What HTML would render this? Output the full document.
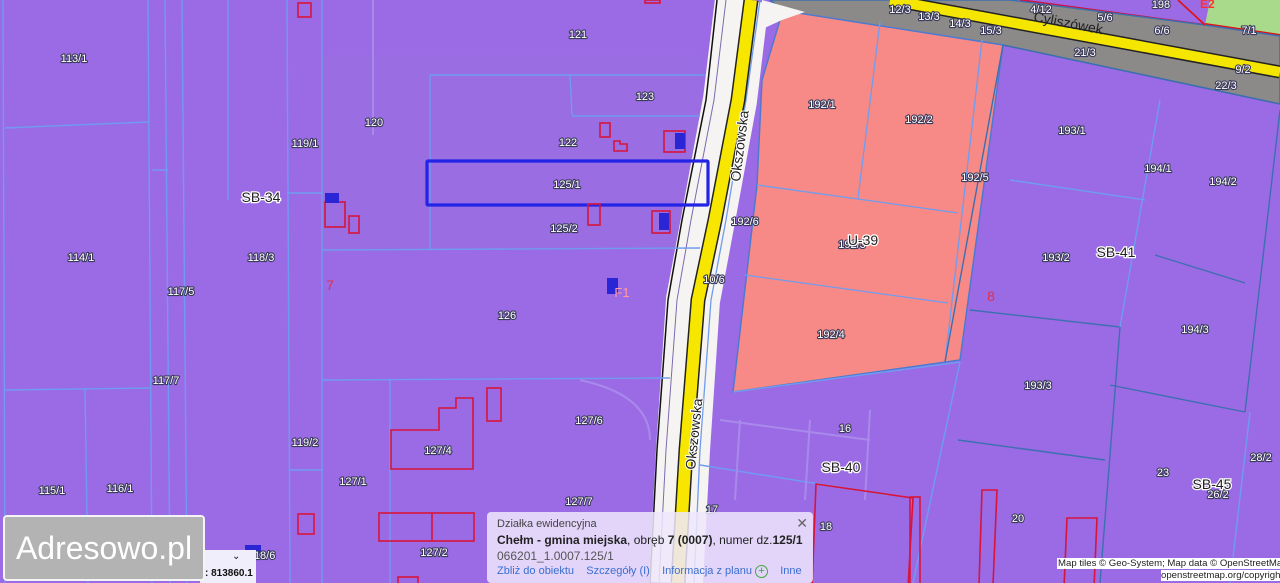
<!DOCTYPE html>
<html><head><meta charset="utf-8"><style>
html,body{margin:0;padding:0;width:1280px;height:583px;overflow:hidden;background:#9b6be6;font-family:"Liberation Sans",sans-serif}
svg{position:absolute;left:0;top:0}
.l{font:11px "Liberation Sans",sans-serif;fill:#fff;stroke:#3a3a5a;stroke-width:2.2px;paint-order:stroke;stroke-linejoin:round;text-anchor:middle}
.z{font:14px "Liberation Sans",sans-serif;fill:#222;stroke:#fff;stroke-width:2.5px;paint-order:stroke;text-anchor:middle}
#pop{position:absolute;left:487px;top:512px;width:326px;height:71px;background:rgba(238,230,252,0.86);border-radius:4px;font-size:12px;color:#222}
#logo{position:absolute;left:3px;top:515px;width:198px;height:62px;background:#b3b3b3;border:2px solid #f4f4f4;border-radius:4px;color:#fff;font-size:32px;line-height:62px;text-align:center}
</style></head><body>
<svg width="1280" height="583" viewBox="0 0 1280 583">
<rect width="1280" height="583" fill="#9b6be6"/>
<rect x="322" y="55" width="380" height="195" fill="#9a6ee0" opacity=".6"/>
<polygon points="1210,0 1280,0 1280,35 1205,25" fill="#a9d98a"/>
<line x1="1205" y1="25" x2="1280" y2="36" stroke="#e01010" stroke-width="4"/>
<line x1="1020" y1="0" x2="1205" y2="25" stroke="#d01040" stroke-width="2"/>
<polygon points="770,0 1010,0 1205,25 1280,36 1280,104 1003,45 785,12" fill="#8c8a88" stroke="#3d6fb0" stroke-width="1.5"/>
<polyline points="890,0 1280,72" stroke="#222" stroke-width="13" fill="none"/>
<polyline points="890,0 1280,72" stroke="#f4e600" stroke-width="10" fill="none"/>
<polygon points="792,12 1003,45 960,360 733,392 757,185 762,80 780,20" fill="#f78a86" stroke="#4d7ad0" stroke-width="1.5"/>
<g stroke="#6f9cf0" stroke-width="1.3" fill="none">
<line x1="880" y1="22" x2="858" y2="198"/><line x1="757" y1="185" x2="958" y2="213"/>
<line x1="982" y1="40" x2="945" y2="362"/><line x1="745" y1="275" x2="948" y2="303"/>
<line x1="1003" y1="45" x2="1280" y2="104" stroke="#3d6fb0"/>
</g>
<polyline points="742,0 730,100 708,220 693,300 683,450 676,583" stroke="#f6f4f2" stroke-width="54" fill="none"/>
<polyline points="717,0 706,100 682,220 668,300 657,450 650,583" stroke="#111" stroke-width="1.5" fill="none"/>
<polyline points="726,0 714,100 691,220 677,300 666,450 659,583" stroke="#7a6ab0" stroke-width="1" fill="none"/>
<polyline points="760,0 746,100 726,220 711,300 700,450 694,583" stroke="#6f9cf0" stroke-width="1.3" fill="none"/>
<polyline points="751,0 738,100 715,220 698,300 686,450 678,583" stroke="#222" stroke-width="15" fill="none"/>
<polyline points="751,0 738,100 715,220 698,300 686,450 678,583" stroke="#f7e600" stroke-width="12" fill="none"/>
<polygon points="762,0 805,12 782,20 760,30" fill="#f6f4f2"/>
<g stroke="#6f9cf0" stroke-width="1.4" fill="none">
<line x1="3" y1="0" x2="5" y2="583"/><line x1="148" y1="0" x2="152" y2="583"/><line x1="165" y1="0" x2="170" y2="583"/>
<line x1="182" y1="0" x2="187" y2="583"/><line x1="287" y1="0" x2="290" y2="583"/><line x1="322" y1="0" x2="322" y2="583"/>
<line x1="5" y1="128" x2="148" y2="122"/><line x1="152" y1="170" x2="168" y2="170"/>
<line x1="287" y1="193" x2="322" y2="193"/><line x1="322" y1="250" x2="700" y2="248"/>
<line x1="228" y1="0" x2="228" y2="200"/><line x1="430" y1="75" x2="430" y2="250"/>
<line x1="430" y1="75" x2="705" y2="75"/><line x1="570" y1="75" x2="572" y2="115"/><line x1="572" y1="116" x2="700" y2="116"/>
<line x1="322" y1="380" x2="670" y2="378"/><line x1="5" y1="390" x2="150" y2="388"/><line x1="85" y1="388" x2="88" y2="583"/>
<line x1="390" y1="380" x2="390" y2="583"/><line x1="290" y1="470" x2="322" y2="470"/>
<line x1="733" y1="392" x2="960" y2="362"/><line x1="960" y1="362" x2="913" y2="583"/>
<line x1="1003" y1="45" x2="945" y2="362" stroke="#3d6fb0"/>
<line x1="970" y1="310" x2="1120" y2="327" stroke="#3d6fb0"/><line x1="1120" y1="327" x2="1100" y2="583" stroke="#3d6fb0"/>
<line x1="1160" y1="100" x2="1120" y2="327"/><line x1="1010" y1="180" x2="1145" y2="200"/>
<line x1="1155" y1="255" x2="1245" y2="283" stroke="#3d6fb0"/><line x1="1280" y1="110" x2="1245" y2="412" stroke="#3d6fb0"/>
<line x1="1110" y1="385" x2="1245" y2="412" stroke="#3d6fb0"/><line x1="1250" y1="412" x2="1230" y2="583"/>
<line x1="958" y1="440" x2="1105" y2="460" stroke="#3d6fb0"/>
<line x1="700" y1="465" x2="888" y2="495"/>
</g>
<g stroke="#a98aea" stroke-width="2" fill="none">
<line x1="720" y1="420" x2="870" y2="440"/><line x1="740" y1="420" x2="735" y2="500"/><line x1="810" y1="420" x2="805" y2="500"/><line x1="870" y1="410" x2="865" y2="500"/>
<line x1="373" y1="0" x2="373" y2="135"/><path d="M580 380 Q650 395 650 440"/>
</g>
<rect x="427" y="161" width="281" height="44" fill="none" stroke="#2424e6" stroke-width="3.2" rx="1"/>
<g stroke="#d8143a" stroke-width="1.6" fill="none">
<rect x="298" y="3" width="13" height="14"/><rect x="645" y="0" width="15" height="3"/>
<rect x="600" y="123" width="10" height="14"/><path d="M614 141h6v3h7v7h-13z"/>
<rect x="664" y="131" width="21" height="21"/><rect x="325" y="202" width="20" height="25"/><rect x="349" y="216" width="10" height="17"/>
<rect x="588" y="204" width="12" height="21"/><rect x="652" y="211" width="18" height="22"/>
<path d="M391 430h48v-22h17v-10h17v71h-82z"/><rect x="487" y="388" width="14" height="33"/>
<rect x="379" y="513" width="95" height="28"/><line x1="432" y1="513" x2="432" y2="541"/>
<rect x="298" y="514" width="16" height="20"/><rect x="398" y="577" width="20" height="10"/>
<path d="M816 484l97 14-5 90h-96z"/><rect x="910" y="497" width="10" height="90"/>
<path d="M982 490h15l-4 95h-14z"/><path d="M1067 518h30l-3 70h-30z"/>
<line x1="1178" y1="0" x2="1205" y2="25" stroke="#e01010"/>
</g>
<g fill="#2a26d6">
<rect x="325" y="193" width="14" height="10"/><rect x="675" y="133" width="10" height="16"/>
<rect x="659" y="213" width="10" height="17"/><rect x="607" y="278" width="11" height="16"/>
<rect x="245" y="545" width="16" height="8"/>
</g>
<g class="l">
<text x="74" y="62">113/1</text><text x="374" y="126">120</text><text x="305" y="147">119/1</text><text x="578" y="38">121</text>
<text x="645" y="100">123</text><text x="568" y="146">122</text><text x="567" y="188">125/1</text><text x="564" y="232">125/2</text>
<text x="81" y="261">114/1</text><text x="261" y="261">118/3</text><text x="181" y="295">117/5</text><text x="507" y="319">126</text>
<text x="166" y="384">117/7</text><text x="305" y="446">119/2</text><text x="438" y="454">127/4</text><text x="589" y="424">127/6</text>
<text x="52" y="494">115/1</text><text x="120" y="492">116/1</text><text x="353" y="485">127/1</text><text x="579" y="505">127/7</text>
<text x="434" y="556">127/2</text><text x="262" y="559">118/6</text>
<text x="822" y="108">192/1</text><text x="919" y="123">192/2</text><text x="975" y="181">192/5</text><text x="745" y="225">192/6</text>
<text x="852" y="248">192/3</text><text x="714" y="283">10/6</text><text x="831" y="338">192/4</text>
<text x="1072" y="134">193/1</text><text x="1158" y="172">194/1</text><text x="1223" y="185">194/2</text><text x="1056" y="261">193/2</text>
<text x="1195" y="333">194/3</text><text x="1038" y="389">193/3</text><text x="845" y="432">16</text><text x="1163" y="476">23</text>
<text x="1261" y="461">28/2</text><text x="1218" y="498">26/2</text><text x="826" y="530">18</text><text x="1018" y="522">20</text>
<text x="900" y="13">12/3</text><text x="929" y="20">13/3</text><text x="960" y="27">14/3</text><text x="991" y="34">15/3</text>
<text x="1041" y="13">4/12</text><text x="1105" y="21">5/6</text><text x="1162" y="34">6/6</text><text x="1085" y="56">21/3</text>
<text x="1243" y="73">9/2</text><text x="1226" y="89">22/3</text><text x="1249" y="34">7/1</text><text x="1161" y="8">198</text>
<text x="712" y="513">17</text>
</g>
<g class="z">
<text x="261" y="202">SB-34</text><text x="863" y="245">U-39</text><text x="1116" y="257">SB-41</text>
<text x="841" y="472">SB-40</text><text x="1212" y="489">SB-45</text>
</g>
<text x="330" y="290" font-size="14" fill="#e0304a" text-anchor="middle">7</text>
<text x="991" y="301" font-size="14" fill="#e0304a" text-anchor="middle">8</text>
<text x="622" y="297" font-size="13" fill="#ff9aa0" text-anchor="middle">F1</text>
<text x="1200" y="8" font-size="12" fill="#ff3030" font-weight="bold">E2</text>
<text font-size="14" fill="#222" stroke="#fff" stroke-width="2" paint-order="stroke" transform="translate(740,182) rotate(-83)">Okszowska</text>
<text font-size="14" fill="#222" stroke="#fff" stroke-width="2" paint-order="stroke" transform="translate(695,470) rotate(-84)">Okszowska</text>
<text font-size="14" fill="#222" transform="translate(1033,21) rotate(11)">Cyliszówek</text>
</svg>
<div style="position:absolute;left:200px;top:550px;width:56px;height:33px;background:#f0eefa;font-size:10px;font-weight:bold;color:#111"><div style="position:absolute;left:5px;top:18px">: 813860.1</div><div style="position:absolute;left:32px;top:1px;font-weight:normal">⌄</div></div>
<div id="logo">Adresowo.pl</div>
<div id="pop">
<div style="position:absolute;left:10px;top:6px;color:#444;font-size:11px">Działka ewidencyjna</div>
<div style="position:absolute;right:5px;top:3px;color:#666;font-size:14px">✕</div>
<div style="position:absolute;left:10px;top:21px;white-space:nowrap"><b>Chełm - gmina miejska</b>, obręb <b>7 (0007)</b>, numer dz.<b>125/1</b></div>
<div style="position:absolute;left:10px;top:37px;color:#555">066201_1.0007.125/1</div>
<div style="position:absolute;left:10px;top:53px;color:#3a6fd0;font-size:11px;white-space:nowrap">Zbliż do obiektu &nbsp;&nbsp; Szczegóły (I) &nbsp;&nbsp; Informacja z planu <span style="display:inline-block;width:11px;height:11px;border:1px solid #4a4;border-radius:50%;color:#3a3;text-align:center;line-height:11px;font-size:11px">+</span> &nbsp;&nbsp; Inne</div>
</div>
<div style="position:absolute;left:1057px;top:558px;background:#fff;font-size:9.6px;color:#222;padding:0 1px;white-space:nowrap;width:225px;overflow:hidden">Map tiles © Geo-System; Map data © OpenStreetMap</div>
<div style="position:absolute;left:1161px;top:570px;background:#fff;font-size:9.6px;color:#222;white-space:nowrap;width:125px;overflow:hidden">openstreetmap.org/copyright</div>
</body></html>
